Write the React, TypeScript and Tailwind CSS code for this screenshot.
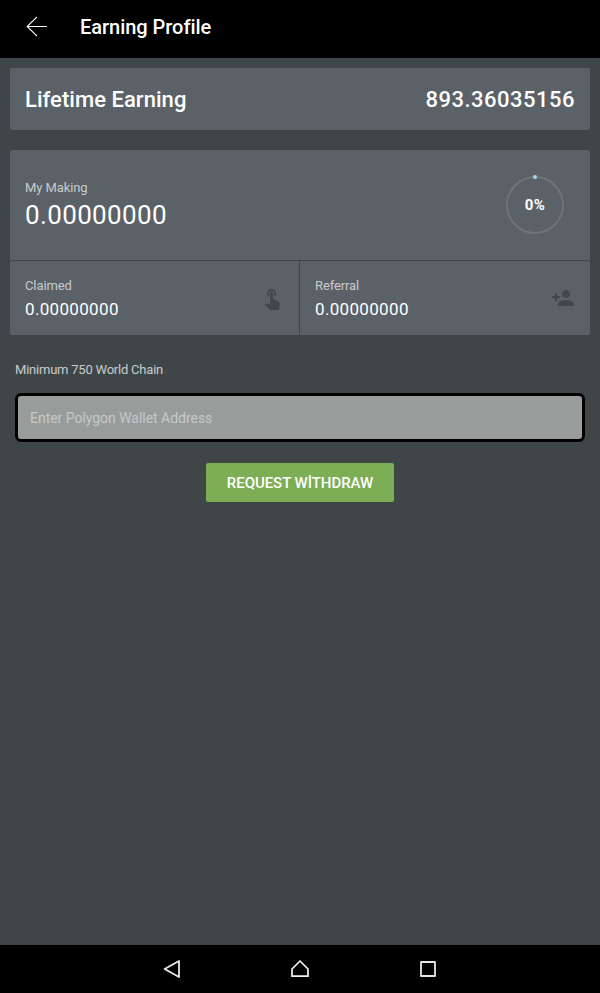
import React from 'react';

const TOUCH =
  'M9 11.24V7.5C9 6.12 10.12 5 11.5 5S14 6.12 14 7.5v3.74c1.21-.81 2-2.18 2-3.74C16 5.01 13.99 3 11.5 3S7 5.01 7 7.5c0 1.56.79 2.93 2 3.74zm9.84 4.63l-4.54-2.26c-.17-.07-.35-.11-.54-.11H13v-6c0-.83-.67-1.5-1.5-1.5S10 6.67 10 7.5v10.74l-3.43-.72c-.08-.01-.15-.03-.24-.03-.31 0-.59.13-.79.33l-.79.8 4.94 4.94c.27.27.65.44 1.06.44h6.79c.75 0 1.33-.55 1.44-1.28l.75-5.27c.01-.07.02-.14.02-.2 0-.62-.38-1.16-.91-1.38z';
const PERSON_ADD =
  'M15 12c2.21 0 4-1.79 4-4s-1.79-4-4-4-4 1.79-4 4 1.79 4 4 4zm-9-2V7H4v3H1v2h3v3h2v-3h3v-2H6zm9 4c-2.67 0-8 1.34-8 4v2h16v-2c0-2.66-5.33-4-8-4z';

function Stat({ label, value, icon, className }: { label: string; value: string; icon: string; className: string }) {
  return (
    <div className={`flex items-start justify-between pl-[15px] pr-[15px] pt-4 ${className}`}>
      <div>
        <div className="text-[13px] leading-[18px] tracking-[-0.1px] text-[#c9cccd]">{label}</div>
        <div className="mt-[2px] text-[17px] leading-6 tracking-[0.33px] text-white">{value}</div>
      </div>
      <svg viewBox="0 0 24 24" className="mt-[9px] size-6 fill-[#3f484a]">
        <path d={icon} />
      </svg>
    </div>
  );
}

export default function App() {
  return (
    <div className="flex h-[993px] w-[600px] flex-col overflow-hidden bg-[#3f4648] font-['Roboto',sans-serif]">
      <header className="flex h-[58px] shrink-0 items-start bg-black pl-[26px]">
        <svg viewBox="0 0 22 22" className="mt-4 h-[22px] w-[22px] fill-none stroke-white" strokeWidth="1.1">
          <path d="M21 10.5H1.2M11 .8L1.2 10.5L11 20.2" />
        </svg>
        <h1 className="ml-8 mt-[13px] text-[20px] font-medium leading-7 tracking-[-0.03px] text-white">Earning Profile</h1>
      </header>

      <main className="flex-1 px-[10px] pt-[10px]">
        <section className="flex h-[62px] items-center justify-between rounded-[2px] bg-[#5a6167] px-[15px] text-[22px] font-medium text-white">
          <span className="tracking-[0.04px]">Lifetime Earning</span>
          <span className="tracking-[0.48px]">893.36035156</span>
        </section>

        <section className="mt-5 h-[185px] overflow-hidden rounded-[2px] bg-[#5a6167]">
          <div className="flex h-[111px] items-start justify-between border-b border-[#3f4648] pl-[15px] pr-[25px]">
            <div className="pt-[29px]">
              <div className="text-[13px] leading-[18px] tracking-[-0.1px] text-[#c9cccd]">My Making</div>
              <div className="mt-[2px] text-[26px] leading-8 tracking-[0.36px] text-white">0.00000000</div>
            </div>
            <div className="mt-[25px] grid size-[60px] place-items-center">
              <svg viewBox="0 0 60 60" className="col-start-1 row-start-1 size-[60px] fill-none">
                <circle cx="30" cy="30" r="28" stroke="#6e7576" strokeWidth="2" />
                <circle cx="30" cy="2" r="2" fill="#b5d6ea" />
              </svg>
              <span className="col-start-1 row-start-1 text-[15px] font-bold leading-5 tracking-[0.3px] text-white">0%</span>
            </div>
          </div>
          <div className="flex h-[74px]">
            <Stat label="Claimed" value="0.00000000" icon={TOUCH} className="w-[289px]" />
            <div className="w-px bg-[#3f4648]" />
            <Stat label="Referral" value="0.00000000" icon={PERSON_ADD} className="flex-1" />
          </div>
        </section>

        <div className="mx-[5px] mt-[26px] flex flex-col">
          <label className="text-[13px] leading-[18px] tracking-[-0.22px] text-[#c9cccd]">Minimum 750 World Chain</label>
          <input
            className="mt-[14px] h-[49px] rounded-[6px] border-[3px] border-black bg-[#989c9a] px-3 text-[14px] tracking-[-0.03px] text-white outline-none placeholder:text-[#c6c9c8]"
            placeholder="Enter Polygon Wallet Address"
          />
          <button className="mt-[21px] h-[39px] w-[188px] self-center rounded-[2px] bg-[#7dad55] pt-px text-[15px] font-medium tracking-[-0.05px] text-white">
            REQUEST WİTHDRAW
          </button>
        </div>
      </main>

      <nav className="flex h-12 shrink-0 items-center justify-center gap-[104px] bg-black">
        <svg viewBox="0 0 24 24" className="size-6 fill-none stroke-[#e8e8e8]" strokeWidth="1.8" strokeLinejoin="round">
          <path d="M19 4V20L4.6 12Z" />
        </svg>
        <svg viewBox="0 0 24 24" className="size-6 fill-none stroke-[#f2f2f2]" strokeWidth="1.7" strokeLinejoin="round">
          <path d="M12 4L4 12V19.2H20V12Z" />
        </svg>
        <svg viewBox="0 0 24 24" className="size-6 fill-none stroke-[#e8e8e8]" strokeWidth="1.8" strokeLinejoin="round">
          <path d="M5 5H19V19H5Z" />
        </svg>
      </nav>
    </div>
  );
}
